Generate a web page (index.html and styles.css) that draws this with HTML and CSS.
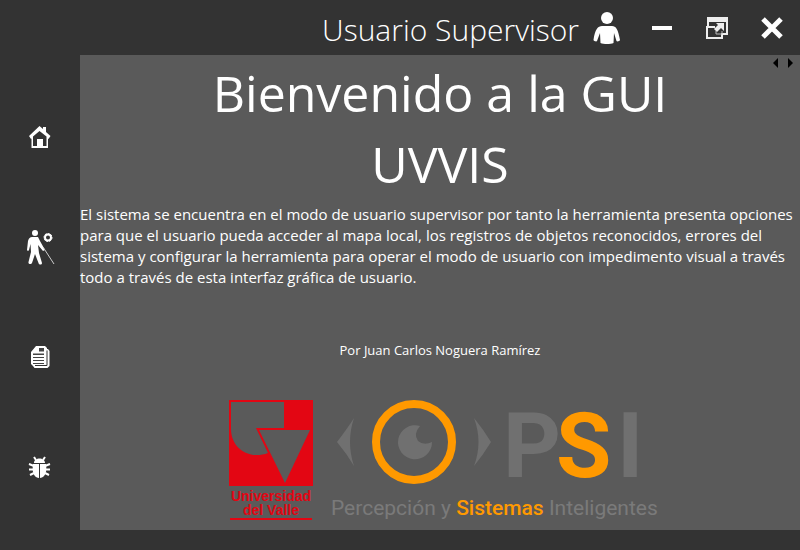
FILE: index.html
```html
<!DOCTYPE html>
<html lang="es">
<head>
<meta charset="utf-8">
<meta name="viewport" content="width=device-width, initial-scale=1">
<title>UVVIS</title>
<link rel="stylesheet" href="styles.css">
</head>
<body>
<div class="window">
  <header class="topbar">
    <span class="user">Usuario Supervisor</span>
    <svg class="avatar" viewBox="0 0 28 34" aria-hidden="true">
      <circle cx="14" cy="7" r="6"/>
      <path d="M9 15h10c4 0 6 3 8 14 0 1-3 2-3.500 1l-2.500-8-.500 10c-3 1.300-10 1.300-13 0l-.500-10L4 30c-.500 1-3.500 0-3.500-1C2 18 5 15 9 15z"/>
    </svg>
    <div class="controls">
      <button class="control" type="button" aria-label="Minimizar">
        <svg viewBox="0 0 22 22"><path d="M1 9h20v4H1z"/></svg>
      </button>
      <button class="control" type="button" aria-label="Restaurar">
        <svg viewBox="0 0 22 22">
          <path class="pane" fill-rule="evenodd" d="M1 0h21v18h-5v4H0V9h1zM3 5v4h6v2H2v9h13v-4h5V5z"/>
          <path class="pane" d="M10 6h8v8l-3-3-4 4-3-3 4-4z"/>
          <path d="M10 14v3h6v-3" class="thin"/>
        </svg>
      </button>
      <button class="control" type="button" aria-label="Cerrar">
        <svg viewBox="0 0 22 22"><path d="M2 2l18 18M20 2L2 20" class="cross"/></svg>
      </button>
    </div>
  </header>

  <nav class="sidebar" aria-label="Principal">
    <button class="nav-item" type="button" aria-label="Inicio">
      <svg class="icon" viewBox="0 0 32 32">
        <path fill-rule="evenodd" d="M15.500 5L19 8V6h3v5l4.500 4-2 3L24 17.500V27H7.500v-9.500L7 18l-2-3zM9 15.500V25h4v-7h6v7h3.500v-9.500L15.500 10z"/>
      </svg>
    </button>
    <button class="nav-item" type="button" aria-label="Asistencia visual">
      <svg class="icon icon-wide" viewBox="0 0 32 40">
        <circle cx="11" cy="6" r="3"/>
        <path d="M8 10h6l2 4 5 9-2 1-5-6 1 8 3 10c0 2-3 2-3.500 0L11 27 8 36c-1 2-4 1-3.500-1L7 25l-.500-8L5 23c0 1-2 1-2 0l1-9c1-3 2-4 4-4z"/>
        <circle cx="24" cy="10.500" r="3" class="gear"/>
        <circle cx="24" cy="10.500" r="4" class="teeth"/>
        <path d="M19 20l11 17" class="cane"/>
      </svg>
    </button>
    <button class="nav-item" type="button" aria-label="Registros">
      <svg class="icon" viewBox="0 0 32 32">
        <path d="M12 5h9l2 2v1h1l1.500 2v15l-2 2h-13l-1.500-2H9l-2-2V11z"/>
        <path d="M9 12.500h11v10.500H9zM15 7h5v3.500h-5zM12 9v2" class="cut"/>
        <path d="M23 9.500v15H11" class="page"/>
        <path d="M9 15h11M9 18h11M9 21h11" class="lines"/>
      </svg>
    </button>
    <button class="nav-item" type="button" aria-label="Errores">
      <svg class="icon" viewBox="0 0 32 32">
        <path d="M10 12c0-6 11-6 11 0zM9 13h6v14C9 26 8 20 9 13zM16 13h6c1 7 0 13-6 14z"/>
        <path d="M12 9L10 6M19 9l2-3M10 15l-5-2M21 15l5-2M10 18.500H5M21 18.500h5M10 22l-4 2M21 22l4 2" class="legs"/>
      </svg>
    </button>
  </nav>

  <main class="content">
    <div class="pager">
      <button class="page-button" type="button" aria-label="Anterior"><svg viewBox="0 0 6 10"><path d="M5 0v10L0 5z"/></svg></button>
      <button class="page-button" type="button" aria-label="Siguiente"><svg viewBox="0 0 6 10"><path d="M0 0v10l5-5z"/></svg></button>
    </div>
    <h1 class="title">Bienvenido a la GUI<br>UVVIS</h1>
    <p class="intro">El sistema se encuentra en el modo de usuario supervisor por tanto la herramienta presenta opciones<br>para que el usuario pueda acceder al mapa local, los registros de objetos reconocidos, errores del<br>sistema y configurar la herramienta para operar el modo de usuario con impedimento visual a través<br>todo a través de esta interfaz gráfica de usuario.</p>
    <p class="author">Por Juan Carlos Noguera Ramírez</p>
    <div class="logos">
      <svg class="logo-valle" viewBox="0 0 84 121" role="img" aria-label="Universidad del Valle">
        <path fill="#e30613" d="M0 0h84v86H0z"/>
        <path fill="#5a5a5a" d="M2 2h53v26H27l12 25C21 60 2 49 2 29zM30 30h51L56 83z"/>
        <text x="42" y="101" class="valle-text">Universidad</text>
        <text x="42" y="115" class="valle-text">del Valle</text>
        <path fill="#e30613" d="M1 118h82v2H1z"/>
      </svg>
      <svg class="logo-psi" viewBox="0 0 320 121" role="img" aria-label="PSI Percepción y Sistemas Inteligentes">
        <path class="gray" d="M23 18Q15 42 23 66Q16 54 6 42Q16 29 23 18z"/>
        <path class="gray" d="M143 18Q152 42 143 66Q152 55 160 42Q152 29 143 18z"/>
        <circle cx="83" cy="42" r="38" fill="none" stroke="#ff9900" stroke-width="8"/>
        <path class="gray" d="M89 26A17 17 0 1 0 101 42Q93 46 87 41Q82 34 89 26z"/>
        <text x="172" y="77" class="psi gray">P</text>
        <text x="225" y="77" class="psi orange">S</text>
        <text x="286" y="77" class="psi gray">I</text>
        <text x="0" y="115" class="tagline"><tspan class="gray">Percepción y </tspan><tspan class="orange">Sistemas</tspan><tspan class="gray"> Inteligentes</tspan></text>
      </svg>
    </div>
  </main>
</div>
</body>
</html>
```

FILE: styles.css
```css
* { box-sizing: border-box; }

body {
  margin: 0;
  background: #333;
  color: #fff;
  font-family: "Open Sans", "Noto Sans", sans-serif;
}

button {
  border: 0;
  padding: 0;
  background: none;
  color: inherit;
  cursor: pointer;
}

svg { display: block; fill: #fff; overflow: visible; }

.window {
  display: grid;
  grid-template-columns: 80px 1fr;
  grid-template-rows: 55px 1fr;
  min-height: 100vh;
}

.topbar {
  grid-column: 1 / -1;
  display: flex;
  align-items: center;
  justify-content: flex-end;
  padding-right: 1px;
}

.user {
  font-size: 30px;
  font-weight: 300;
  line-height: 40px;
  padding-top: 4px;
}

.avatar { width: 28px; height: 34px; margin-left: 14px; }

.controls { display: flex; margin-left: 13px; }

.control {
  display: grid;
  place-items: center;
  width: 55px;
  height: 53px;
}

.control svg { width: 22px; height: 22px; }

.pane { fill: #eee; }
.thin { fill: none; stroke: #bbb; stroke-width: 1; }
.cross { fill: none; stroke: #fff; stroke-width: 5; }

.sidebar {
  display: flex;
  flex-direction: column;
  padding: 27px 0 28px;
}

.nav-item {
  flex: 1;
  display: grid;
  place-items: center;
}

.icon { width: 32px; height: 32px; }
.icon-wide { height: 40px; }

.gear { fill: none; stroke: #fff; stroke-width: 2; }
.teeth { fill: none; stroke: #fff; stroke-width: 1; stroke-dasharray: 2 1; }
.cane { fill: none; stroke: #ccc; stroke-width: 1; }
.cut { fill: #444; }
.page { fill: none; stroke: #333; stroke-width: 1; }
.lines { fill: none; stroke: #fff; stroke-width: 2; }
.legs { fill: none; stroke: #fff; stroke-width: 2; }

.content {
  position: relative;
  margin-bottom: 20px;
  background: #5a5a5a;
}

.pager {
  position: absolute;
  top: 2px;
  right: 5px;
  display: flex;
  gap: 7px;
}

.page-button { width: 8px; height: 11px; }
.page-button svg { width: 6px; height: 10px; margin: 0 auto; fill: #000; }

.title {
  margin: 0;
  padding-top: 3px;
  font-size: 50px;
  font-weight: 400;
  line-height: 71px;
  text-align: center;
}

.intro {
  margin: 4px 0 0;
  font-size: 15px;
  line-height: 21px;
  white-space: nowrap;
}

.author {
  margin: 52px 0 0;
  font-size: 13px;
  line-height: 20px;
  text-align: center;
}

.logos {
  display: flex;
  justify-content: center;
  gap: 18px;
  margin-top: 40px;
}

.logo-valle { width: 84px; height: 121px; }
.logo-psi { width: 320px; height: 121px; }

.valle-text {
  fill: #e30613;
  font: bold 14px "Liberation Sans", sans-serif;
  text-anchor: middle;
}

.gray { fill: #707070; }
.orange { fill: #f90; }
.psi { font: 700 90px Roboto, sans-serif; }
.tagline { font: 400 21px Roboto, sans-serif; white-space: pre; }
.tagline .gray { fill: #7a7a7a; }
.tagline .orange { font-weight: 500; }
```
